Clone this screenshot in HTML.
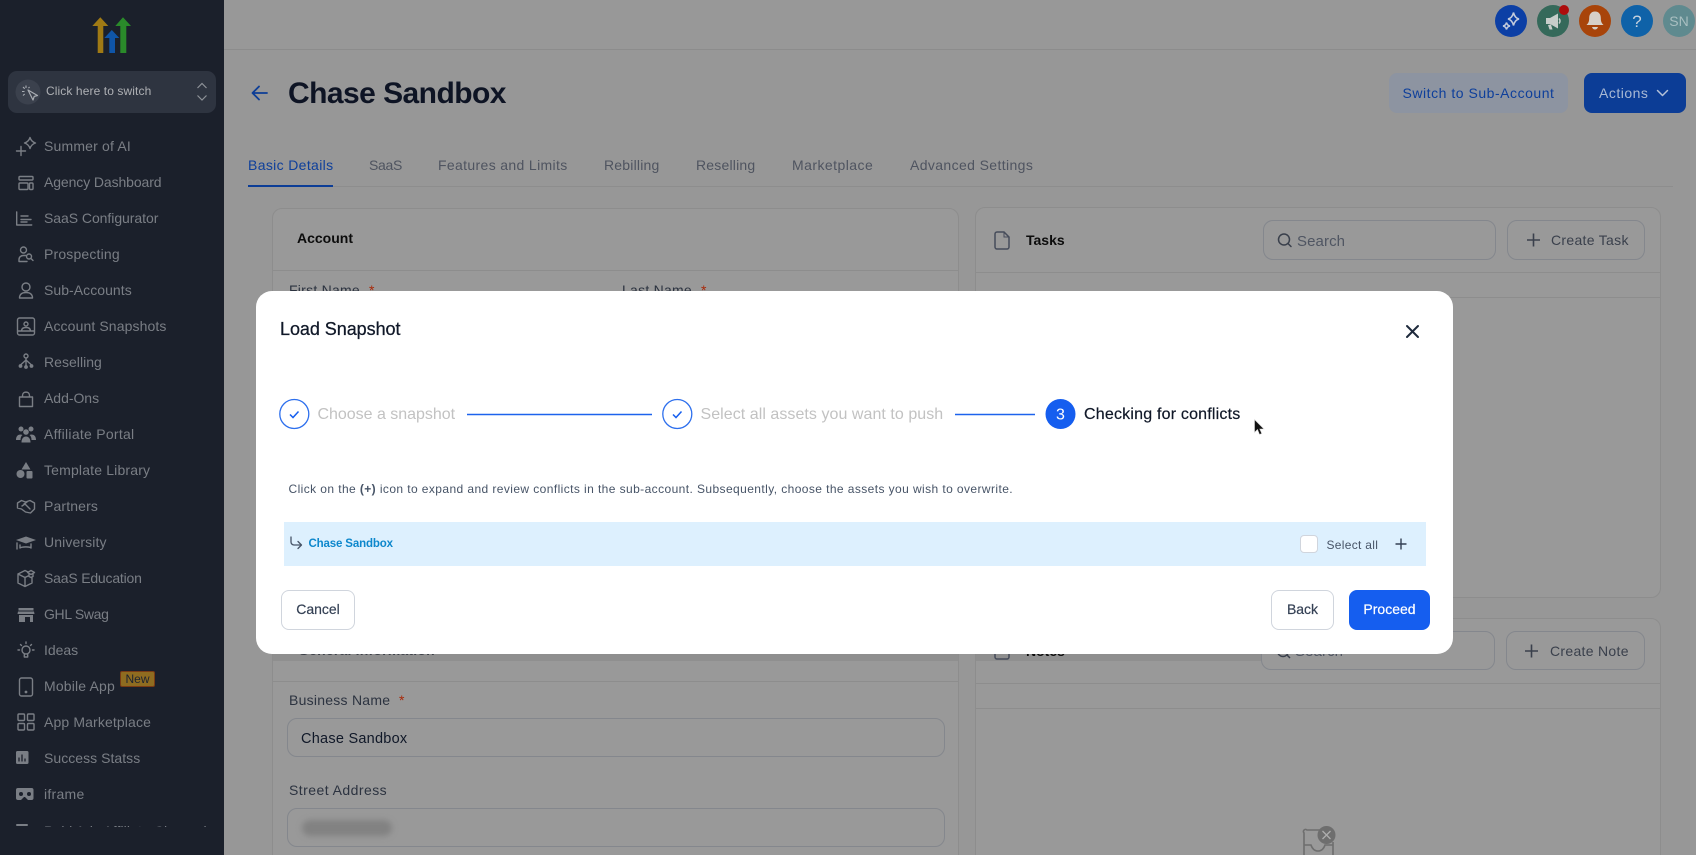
<!DOCTYPE html>
<html lang="en">
<head>
<meta charset="utf-8">
<title>Load Snapshot</title>
<style>
html,body{margin:0;padding:0;width:1696px;height:855px;overflow:hidden;background:#979797;font-family:"Liberation Sans",sans-serif}
*{box-sizing:border-box}
#root{position:relative;width:1696px;height:855px;overflow:hidden;background:#979797}
.a{position:absolute}
.t{position:absolute;white-space:nowrap;line-height:20px;height:20px}
.side{left:44px;font-size:14px;color:#7a7e85}
.card{position:absolute;background:#999;border:1px solid #8d8d8d;border-radius:10px}
.ln{position:absolute;height:1px;background:#8d8d8d}
.box{position:absolute;border:1px solid #84878d;border-radius:10px;background:#999}
.tab{top:155px;font-size:14px;color:#4f5460}
.lab{font-size:14px;letter-spacing:.25px;color:#2c3340}
.req{color:#a8290a;font-size:14px}
.btn{position:absolute;border-radius:8px;text-align:center;font-size:14px;line-height:36px;height:40px;border:1.5px solid #d0d5dd;background:#fff;color:#344054;-webkit-text-stroke:.2px currentColor}
.step{font-size:16px;color:#c2c2c2;top:405px}
svg{position:absolute;left:0;top:0;overflow:visible}
</style>
</head>
<body>
<div id="root">
<!-- main header -->
<div class="a" style="left:224px;top:0;width:1472px;height:50px;background:#989898;border-bottom:1.5px solid #8c8c8c"></div>

<!-- header circles -->
<svg width="1696" height="60" viewBox="0 0 1696 60">
<circle cx="1511" cy="21" r="16" fill="#0c3fa5"/>
<path d="M1513.500 12.500q1.200 5.500 5.500 6.500-4.300 1-5.500 6.500-1.200-5.500-5.500-6.500 4.300-1 5.500-6.500z" fill="none" stroke="#c3cbdc" stroke-width="1.600"/>
<path d="M1506.500 22.500q.7 3 3.500 3.500-2.800.5-3.500 3.500-.7-3-3.500-3.500 2.800-.5 3.500-3.500z" fill="none" stroke="#c3cbdc" stroke-width="1.600"/>
<circle cx="1553" cy="21" r="16" fill="#35695a"/>
<path d="M1546 18h4l8-4.500v15l-8-4.500h-4z" fill="#c8cdca"/><path d="M1548 25l1.500 4.500h3l-1.500-5" fill="#c8cdca"/><path d="M1559 18.500q2 2.500 0 5" stroke="#c8cdca" stroke-width="1.500" fill="none"/>
<circle cx="1564" cy="10" r="5" fill="#ad0c0c"/>
<circle cx="1595" cy="21" r="16" fill="#a8440a"/>
<path d="M1595 11.500c-4 0-5.800 3-5.800 6.500 0 4-1.200 5.500-2.700 7h17c-1.500-1.500-2.700-3-2.700-7 0-3.500-1.800-6.500-5.800-6.500z" fill="#d6d0c8"/><path d="M1592 27h6q-.8 2.500-3 2.500t-3-2.500z" fill="#d6d0c8"/>
<circle cx="1637" cy="21" r="16" fill="#0f62a8"/>
<text x="1637" y="27" text-anchor="middle" font-family="Liberation Sans" font-size="17" fill="#c8d3df">?</text>
<circle cx="1679" cy="21" r="16" fill="#5f8a8f"/>
<text x="1679" y="26" text-anchor="middle" font-family="Liberation Sans" font-size="14" fill="#a9bfc1">SN</text>
</svg>

<!-- title row -->
<svg width="300" height="110" viewBox="0 0 300 110"><path d="M267 93h-14M259 86.500l-6.500 6.500 6.500 6.500" fill="none" stroke="#0c3d96" stroke-width="1.800" stroke-linecap="round" stroke-linejoin="round"/></svg>
<div class="t" style="left:288px;top:79px;height:30px;line-height:30px;font-size:30px;font-weight:bold;color:#0e1424;letter-spacing:-.55px">Chase Sandbox</div>
<div class="a" style="left:1389px;top:73px;width:179px;height:40px;border-radius:8px;background:#8d94a1;color:#0e3f9b;font-size:14px;line-height:40px;text-align:center;letter-spacing:.53px">Switch to Sub-Account</div>
<div class="a" style="left:1584px;top:73px;width:102px;height:40px;border-radius:8px;background:#0c3d96;color:#a9b9d4;font-size:14px;line-height:40px;padding-left:15px;letter-spacing:.5px">Actions</div>
<svg width="1696" height="110" viewBox="0 0 1696 110"><path d="M1657.500 90.500l5 5 5-5" fill="none" stroke="#b4c1d8" stroke-width="1.500" stroke-linecap="round" stroke-linejoin="round"/></svg>

<!-- tabs -->
<div class="t tab" style="left:248px;color:#0e3f9b;letter-spacing:.35px">Basic Details</div>
<div class="t tab" style="left:369px;letter-spacing:-.3px">SaaS</div>
<div class="t tab" style="left:438px;letter-spacing:.35px">Features and Limits</div>
<div class="t tab" style="left:604px;letter-spacing:.2px">Rebilling</div>
<div class="t tab" style="left:696px;letter-spacing:.2px">Reselling</div>
<div class="t tab" style="left:792px;letter-spacing:.45px">Marketplace</div>
<div class="t tab" style="left:910px;letter-spacing:.38px">Advanced Settings</div>
<div class="ln" style="left:248px;top:186px;width:1425px"></div>
<div class="a" style="left:248px;top:185px;width:85px;height:2px;background:#0c3d96"></div>

<!-- account card -->
<div class="card" style="left:272px;top:208px;width:687px;height:440px"></div>
<div class="ln" style="left:273px;top:270px;width:685px"></div>
<div class="t" style="left:297px;top:228px;font-size:14px;font-weight:bold;color:#0c0c0c">Account</div>
<div class="t lab" style="left:289px;top:280px">First Name</div><div class="t req" style="left:369px;top:280px">*</div>
<div class="t lab" style="left:622px;top:280px">Last Name</div><div class="t req" style="left:701px;top:280px">*</div>

<!-- tasks card -->
<div class="card" style="left:975px;top:207px;width:686px;height:391px"></div>
<div class="ln" style="left:976px;top:272px;width:684px"></div>
<div class="ln" style="left:976px;top:297px;width:684px"></div>
<svg width="1696" height="300" viewBox="0 0 1696 300" fill="none" stroke="#464c5a" stroke-width="1.500"><path d="M997 232h7l5 5v10a2 2 0 0 1-2 2h-10a2 2 0 0 1-2-2v-13a2 2 0 0 1 2-2z"/><path d="M1004 232v5h5" stroke-width="1"/></svg>
<div class="t" style="left:1026px;top:230px;font-size:14px;font-weight:bold;color:#0c0c0c">Tasks</div>
<div class="box" style="left:1263px;top:220px;width:233px;height:40px"></div>
<svg width="1696" height="300" viewBox="0 0 1696 300" fill="none" stroke="#3a404c" stroke-width="1.500"><circle cx="1284" cy="239.500" r="5.500"/><path d="M1288 243.500l3 3" stroke-linecap="round"/></svg>
<div class="t" style="left:1297px;top:232px;font-size:15px;color:#4f5562;letter-spacing:.1px">Search</div>
<div class="box" style="left:1507px;top:220px;width:138px;height:40px"></div>
<svg width="1696" height="300" viewBox="0 0 1696 300" fill="none" stroke="#3a404c" stroke-width="1.600"><path d="M1533.500 233.500v13M1527 240h13"/></svg>
<div class="t" style="left:1551px;top:230px;font-size:14px;color:#3a404c;letter-spacing:.3px">Create Task</div>

<!-- general info card -->
<div class="card" style="left:272px;top:620px;width:687px;height:260px"></div>
<div class="a" style="left:273px;top:654px;width:685px;height:7px;background:#8f8f8f"></div>
<div class="t" style="left:298px;top:640px;font-size:14px;font-weight:bold;color:#3c4048;letter-spacing:.2px">General Information</div>
<div class="ln" style="left:273px;top:681px;width:685px"></div>
<div class="t lab" style="left:289px;top:690px">Business Name</div><div class="t req" style="left:399px;top:690px">*</div>
<div class="box" style="left:287px;top:718px;width:658px;height:39px"></div>
<div class="t" style="left:301px;top:729px;font-size:14.500px;color:#101828;letter-spacing:.25px">Chase Sandbox</div>
<div class="t lab" style="left:289px;top:780px;letter-spacing:.45px">Street Address</div>
<div class="box" style="left:287px;top:808px;width:658px;height:39px"></div>
<div class="a" style="left:302px;top:820px;width:90px;height:16px;border-radius:8px;background:#828282;filter:blur(3px)"></div>

<!-- notes card -->
<div class="card" style="left:975px;top:618px;width:686px;height:260px"></div>
<div class="a" style="left:976px;top:654px;width:480px;height:7px;background:#8f8f8f"></div>
<svg width="1696" height="855" viewBox="0 0 1696 855" fill="none" stroke="#464c5a" stroke-width="1.500"><rect x="995" y="643" width="14" height="16" rx="2"/></svg>
<div class="t" style="left:1026px;top:641px;font-size:14px;font-weight:bold;color:#0c0c0c">Notes</div>
<div class="box" style="left:1261px;top:631px;width:234px;height:39px"></div>
<svg width="1696" height="855" viewBox="0 0 1696 855" fill="none" stroke="#3a404c" stroke-width="1.500"><circle cx="1283" cy="651" r="5.500"/><path d="M1287 655l3 3"/></svg>
<div class="t" style="left:1295px;top:642px;font-size:15px;color:#4f5562;letter-spacing:.1px">Search</div>
<div class="box" style="left:1506px;top:631px;width:139px;height:39px"></div>
<svg width="1696" height="855" viewBox="0 0 1696 855" fill="none" stroke="#3a404c" stroke-width="1.600"><path d="M1531.500 644.500v13M1525 651h13"/></svg>
<div class="t" style="left:1550px;top:641px;font-size:14px;color:#3a404c;letter-spacing:.3px">Create Note</div>
<div class="ln" style="left:976px;top:683px;width:684px"></div>
<div class="ln" style="left:976px;top:708px;width:684px"></div>
<svg width="1696" height="855" viewBox="0 0 1696 855"><path d="M1321 830h-14a2 2 0 0 0-3 3v22M1333 842v13M1304 845h7q2 6 7 6t7-6h8" fill="none" stroke="#6e6e6e" stroke-width="1.600"/><circle cx="1326.500" cy="835" r="9" fill="#6e6e6e"/><path d="M1322.500 831l8 8M1330.500 831l-8 8" stroke="#adadad" stroke-width="1.300"/></svg>

<!-- sidebar -->
<div class="a" style="left:0;top:0;width:224px;height:855px;background:#1b202b"></div>
<svg width="224" height="60" viewBox="0 0 224 60">
<path d="M100.300 17.300l8 8.700h-5v27h-5.600v-27h-5.400z" fill="#a07a14"/>
<path d="M123 17.300l8 8.700h-4.700v27h-6v-27h-5z" fill="#2a8a2a"/>
<path d="M111.800 30l7.500 8h-4.300v15h-5.700v-15h-5z" fill="#0f55a8"/>
</svg>
<div class="a" style="left:8px;top:71px;width:208px;height:41.500px;border-radius:9px;background:#2e3440"></div>
<svg width="224" height="120" viewBox="0 0 224 120" fill="none">
<circle cx="28" cy="92" r="12.500" fill="#3b414d"/>
<path d="M28 90l5 10 1.200-3.600 3.300-.9z" stroke="#a9adb3" stroke-width="1.200" stroke-linejoin="round"/>
<path d="M26 85.500v2.500M22 91.500h2.500M23 87l1.700 1.700M29.500 87l-1 1.200M23 95.500l1.700-1.500" stroke="#a9adb3" stroke-width="1.100"/>
<path d="M197.500 88l4.500-4.500 4.500 4.500M197.500 95.500l4.500 4.500 4.500-4.500" stroke="#8e9298" stroke-width="1.200"/>
</svg>
<div class="t" style="left:46px;top:81px;font-size:12px;letter-spacing:.1px;color:#aeb0b4">Click here to switch</div>

<div class="t side" style="top:136px;letter-spacing:.18px">Summer of AI</div>
<div class="t side" style="top:172px;letter-spacing:-.1px">Agency Dashboard</div>
<div class="t side" style="top:208px;letter-spacing:-.05px">SaaS Configurator</div>
<div class="t side" style="top:244px;letter-spacing:.17px">Prospecting</div>
<div class="t side" style="top:280px;letter-spacing:.05px">Sub-Accounts</div>
<div class="t side" style="top:316px;letter-spacing:.11px">Account Snapshots</div>
<div class="t side" style="top:352px;letter-spacing:.03px">Reselling</div>
<div class="t side" style="top:388px;letter-spacing:-.03px">Add-Ons</div>
<div class="t side" style="top:424px;letter-spacing:.27px">Affiliate Portal</div>
<div class="t side" style="top:460px;letter-spacing:.17px">Template Library</div>
<div class="t side" style="top:496px;letter-spacing:.14px">Partners</div>
<div class="t side" style="top:532px;letter-spacing:.11px">University</div>
<div class="t side" style="top:568px;letter-spacing:-.19px">SaaS Education</div>
<div class="t side" style="top:604px;letter-spacing:-.33px">GHL Swag</div>
<div class="t side" style="top:640px;letter-spacing:-.03px">Ideas</div>
<div class="t side" style="top:676px;letter-spacing:.17px">Mobile App</div>
<div class="t side" style="top:712px;letter-spacing:.13px">App Marketplace</div>
<div class="t side" style="top:748px;letter-spacing:.04px">Success Statss</div>
<div class="t side" style="top:784px;letter-spacing:.27px">iframe</div>
<div class="a" style="left:0;top:820px;width:224px;height:7px;overflow:hidden"><div class="t side" style="top:1px;letter-spacing:.1px">Paid Ads Affiliate Channels</div></div>
<div class="a" style="left:120px;top:671px;width:35px;height:16px;border-radius:2px;background:#8f6c20;border:1px solid #7a3b14;color:#1e2430;font-size:12px;line-height:14px;text-align:center">New</div>

<svg width="224" height="855" viewBox="0 0 224 855" fill="none" stroke="#7a7e85" stroke-width="1.400" stroke-linecap="round" stroke-linejoin="round">
<path d="M21 146.500v9M16.500 151h9"/><path d="M30 137.500q1.300 4.200 5.500 5.500-4.200 1.300-5.500 5.500-1.300-4.200-5.500-5.500 4.200-1.300 5.500-5.500z"/>
<rect x="19" y="176.500" width="14" height="3.500" rx="1"/><rect x="19" y="183" width="9" height="6.500" rx="1"/><rect x="29.500" y="183" width="3.500" height="6.500" rx="1"/>
<path d="M16.700 212v13h15M21 216h7M21 219.500h10M21 222h6"/>
<circle cx="23.500" cy="250" r="3"/><path d="M19 261.500v-2c0-2.500 2-4 4.500-4h2M19 261.500h8"/><circle cx="29" cy="256.500" r="2.500"/><path d="M31 258.500l2 2"/>
<circle cx="26" cy="287" r="4"/><path d="M19.500 298c0-4 3-5.500 6.500-5.500s6.500 1.500 6.500 5.500z"/>
<rect x="17.500" y="318" width="17" height="17" rx="2"/><circle cx="26" cy="324" r="2"/><path d="M21.500 331c0-2.500 2-3.500 4.500-3.500s4.500 1 4.500 3.500M18 331h16"/>
<circle cx="26" cy="356" r="2"/><path d="M26 358v8M26 360l-5 4.500M26 360l5 4.500"/><circle cx="20.500" cy="366" r="1.200" fill="#7a7e85"/><circle cx="26" cy="367" r="1.200" fill="#7a7e85"/><circle cx="31.500" cy="366" r="1.200" fill="#7a7e85"/>
<path d="M19.500 397h13v9.500h-13zM22.500 397v-1.500c0-4.500 7-4.500 7 0v1.500"/>
<rect x="19.500" y="678" width="13" height="18" rx="2"/><circle cx="26" cy="692" r=".7" fill="#7a7e85"/>
<rect x="18" y="714" width="6.500" height="6.500" rx="1"/><rect x="27.500" y="714" width="6.500" height="6.500" rx="1"/><rect x="18" y="723.500" width="6.500" height="6.500" rx="1"/><rect x="27.500" y="723.500" width="6.500" height="6.500" rx="1"/>
<path d="M17.500 503l4-2.500 4 1.500 4.500-1.500 4.500 2.500v6l-4 4-5-1-4-3-4-1zM24 504l3 -2M22 506l3-2 5 5"/>
<path d="M18 574l7-3.500 3 1.500M18 574v9l7 3.500 7-3.500v-5M18 574l7 3.500v9M25 577.500l3-1.500M27.500 572.500l3.500-2 3.500 2-3.500 2zM29 574v2.500l2 1 2-1V574"/>
<circle cx="26" cy="650" r="4"/><path d="M24.300 654.500v2.500h3.400v-2.500M19.500 650h-1.500M34 650h-1.500M21.500 645.500l-1-1M31.500 644.500l-1 1M26 643.500v-1.500"/>
<path d="M17 543v6"/><path d="M20 545v3c2-1.500 10-1.500 11 0v-4"/>
<g fill="#7a7e85" stroke="none">
<circle cx="21" cy="429" r="2.500"/><circle cx="31" cy="429" r="2.500"/><circle cx="26" cy="432" r="2.800"/>
<path d="M16 440c0-4 2-5.500 5-5.500l1.500.5c-1.500 1-2 3-2 5zM36 440c0-4-2-5.500-5-5.500l-1.500.5c1.500 1 2 3 2 5zM21.500 442.500c0-4 2-6 4.500-6s4.500 2 4.500 6z"/>
<path d="M26 462l4.500 7.500h-9z"/><circle cx="20.500" cy="474" r="4"/><rect x="26.500" y="471" width="6" height="7.500" rx="1"/>
<path d="M16 540l10-3.500 10 3.500-10 3.500z"/>
<path d="M18.500 608h15v2.500h-15zM18 611.500h16l.5 2.500h-17z"/><path d="M19 615h14v7h-3v-5h-5v5h-6z"/>
<path d="M16 752.500a1.500 1.500 0 0 1 1.500-1.500h9.500a1.500 1.500 0 0 1 1.500 1.500v10a1.500 1.500 0 0 1-1.500 1.500h-9.500a1.500 1.500 0 0 1-1.500-1.500z"/>
<path d="M18 788h13.500a2 2 0 0 1 2 2v8a2 2 0 0 1-2 2h-3.500l-3-3h-1l-3 3h-3a2 2 0 0 1-2-2v-8a2 2 0 0 1 2-2z"/>
<rect x="16" y="824" width="12" height="2" rx="1"/>
</g>
<path d="M19 761v-3M22 761v-6M25 761v-2" stroke="#1b202b" stroke-width="1.300"/>
<circle cx="21" cy="794" r="2" fill="#1b202b" stroke="none"/><circle cx="29" cy="794" r="2" fill="#1b202b" stroke="none"/>
</svg>

<!-- modal -->
<div class="a" style="left:256px;top:291px;width:1197px;height:363px;background:#fff;border-radius:16px"></div>
<div class="t" style="left:280px;top:319px;font-size:18px;color:#101828;letter-spacing:-.05px;-webkit-text-stroke:.25px #101828">Load Snapshot</div>
<svg width="1696" height="855" viewBox="0 0 1696 855" fill="none">
<path d="M1407 326l11 11M1418 326l-11 11" stroke="#1e2a3c" stroke-width="2" stroke-linecap="round"/>
<circle cx="294.300" cy="414" r="14.500" stroke="#2d6fed" stroke-width="1.300"/>
<path d="M290 414.500l3 3 5.500-6" stroke="#155eef" stroke-width="1.500"/>
<path d="M467 414.500h185" stroke="#1d63ed" stroke-width="1.500"/>
<circle cx="677.300" cy="414" r="14.500" stroke="#2d6fed" stroke-width="1.300"/>
<path d="M673 414.500l3 3 5.500-6" stroke="#155eef" stroke-width="1.500"/>
<path d="M955 414.500h80" stroke="#1d63ed" stroke-width="1.500"/>
<circle cx="1060.500" cy="414" r="15" fill="#155eef"/>
<text x="1060.500" y="419.500" text-anchor="middle" font-family="Liberation Sans" font-size="16" fill="#fff">3</text>
<path d="M1254.500 419.500v13l3-3 2 5 2.300-1-2-4.500h4.200z" fill="#111" stroke="#ddd" stroke-width=".6"/>
</svg>
<div class="t step" style="left:317.500px;letter-spacing:-.02px">Choose a snapshot</div>
<div class="t step" style="left:700.500px;letter-spacing:.05px">Select all assets you want to push</div>
<div class="t step" style="left:1084px;color:#101828;letter-spacing:.2px;-webkit-text-stroke:.2px #101828">Checking for conflicts</div>
<div class="t" style="left:288.500px;top:479px;font-size:12px;letter-spacing:.41px;color:#475467">Click on the <b>(+)</b> icon to expand and review conflicts in the sub-account. Subsequently, choose the assets you wish to overwrite.</div>
<div class="a" style="left:284px;top:522px;width:1141.500px;height:44px;background:#ddf0fe"></div>
<svg width="1696" height="855" viewBox="0 0 1696 855" fill="none"><path d="M291 537v5a3 3 0 0 0 3 3h7M298 541.500l3.500 3.500-3.500 3.500" stroke="#475467" stroke-width="1.300" stroke-linecap="round" stroke-linejoin="round"/>
<path d="M1401 538.500v11M1395.500 544h11" stroke="#344054" stroke-width="1.400"/></svg>
<div class="t" style="left:308.500px;top:534px;font-size:11.500px;font-weight:bold;color:#0d87cc;letter-spacing:-.15px">Chase Sandbox</div>
<div class="a" style="left:1300px;top:535px;width:18px;height:18px;border-radius:4px;background:#fff;border:1px solid #d0d5dd"></div>
<div class="t" style="left:1326.500px;top:535px;font-size:12px;color:#475467;letter-spacing:.3px">Select all</div>
<div class="btn" style="left:281px;top:590px;width:74px">Cancel</div>
<div class="btn" style="left:1271px;top:590px;width:63px">Back</div>
<div class="btn" style="left:1349px;top:590px;width:81px;background:#155eef;border-color:#155eef;color:#fff">Proceed</div>
</div>
</body>
</html>
